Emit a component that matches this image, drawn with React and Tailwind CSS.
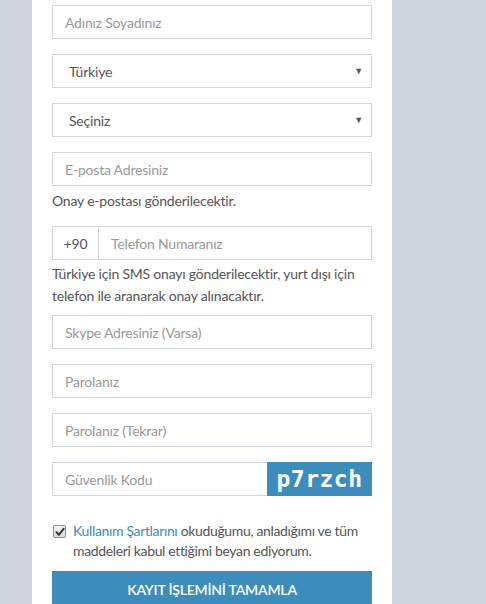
import React, { useState } from "react";

const inputClass =
  "block w-full h-[34px] border border-[#d2d6de] bg-white px-3 text-[14px] text-[#555] placeholder:text-[#999] outline-none focus:border-[#3c8dbc]";

const Select = ({ value, options }) => {
  return (
    <div className="relative">
      <select
        defaultValue={value}
        className="block w-full h-[34px] appearance-none border border-[#d2d6de] bg-white pl-4 pr-8 text-[14px] text-[#555] outline-none"
      >
        {options.map((o) => (
          <option key={o}>{o}</option>
        ))}
      </select>
      <span className="pointer-events-none absolute right-[9px] top-1/2 -translate-y-1/2 text-[9px] text-[#555]">
        ▼
      </span>
    </div>
  );
};

const App = () => {
  const [agree, setAgree] = useState(true);

  return (
    <div
      className="min-h-[604px] bg-[#d2d6de] text-[#333] tracking-[-0.2px]"
      style={{ fontFamily: "Lato, 'Open Sans', sans-serif" }}
    >
      <div className="ml-[32px] w-[360px] min-h-[604px] bg-white px-5 pt-[5px]">
        <input type="text" placeholder="Adınız Soyadınız" className={inputClass} />

        <div className="mt-[15px]">
          <Select value="Türkiye" options={["Türkiye", "Almanya", "Hollanda"]} />
        </div>

        <div className="mt-[15px]">
          <Select value="Seçiniz" options={["Seçiniz", "İstanbul", "Ankara", "İzmir"]} />
        </div>

        <input
          type="text"
          placeholder="E-posta Adresiniz"
          className={"mt-[15px] " + inputClass}
        />
        <p className="mt-[5px] text-[14px] leading-[20px] text-[#555]">
          Onay e-postası gönderilecektir.
        </p>

        <div className="mt-[15px] flex h-[34px] border border-[#d2d6de]">
          <span className="flex w-[46px] items-center justify-center border-r border-[#d2d6de] text-[14px] text-[#555]">
            +90
          </span>
          <input
            type="text"
            placeholder="Telefon Numaranız"
            className="h-full flex-1 px-3 text-[14px] text-[#555] placeholder:text-[#999] outline-none"
          />
        </div>
        <p className="mt-[3px] text-[14px] leading-[22px] text-[#555]">
          Türkiye için SMS onayı gönderilecektir, yurt dışı için telefon ile
          aranarak onay alınacaktır.
        </p>

        <input
          type="text"
          placeholder="Skype Adresiniz (Varsa)"
          className={"mt-[8px] " + inputClass}
        />
        <input
          type="password"
          placeholder="Parolanız"
          className={"mt-[15px] " + inputClass}
        />
        <input
          type="password"
          placeholder="Parolanız (Tekrar)"
          className={"mt-[15px] " + inputClass}
        />

        <div className="mt-[15px] flex h-[34px]">
          <input
            type="text"
            placeholder="Güvenlik Kodu"
            className="h-full flex-1 border border-r-0 border-[#d2d6de] px-3 text-[14px] text-[#555] placeholder:text-[#999] outline-none"
          />
          <div
            className="flex h-full w-[105px] items-center justify-center bg-[#3c8dbc] text-[23px] font-bold tracking-[0.5px] text-white"
            style={{ fontFamily: "'DejaVu Sans Mono', monospace" }}
          >
            p7rzch
          </div>
        </div>

        <label className="mt-[25px] flex cursor-pointer items-start gap-[7px] text-[14px] leading-[20px] tracking-[-0.35px] text-[#555]">
          <span
            onClick={() => setAgree(!agree)}
            className="mt-[4px] ml-[1px] flex h-[13px] w-[13px] shrink-0 items-center justify-center rounded-[2px] border border-[#8f8f8f] bg-gradient-to-b from-[#f4f4f4] to-[#dcdcdc]"
          >
            {agree && (
              <svg width="10" height="10" viewBox="0 0 10 10">
                <path
                  d="M1.5 5.2 L3.8 7.8 L8.6 1.8"
                  fill="none"
                  stroke="#333"
                  strokeWidth="2"
                  strokeLinecap="round"
                  strokeLinejoin="round"
                />
              </svg>
            )}
          </span>
          <span className="flex-1">
            <a href="#" className="text-[#3c8dbc]">
              Kullanım Şartlarını
            </a>{" "}
            okuduğumu, anladığımı ve tüm maddeleri kabul ettiğimi beyan
            ediyorum.
          </span>
        </label>

        <button className="mt-[10px] flex h-[36px] w-full items-center justify-center bg-[#3c8dbc] text-[14px] font-semibold text-white">
          KAYIT İŞLEMİNİ TAMAMLA
        </button>
      </div>
    </div>
  );
};

export default App;
